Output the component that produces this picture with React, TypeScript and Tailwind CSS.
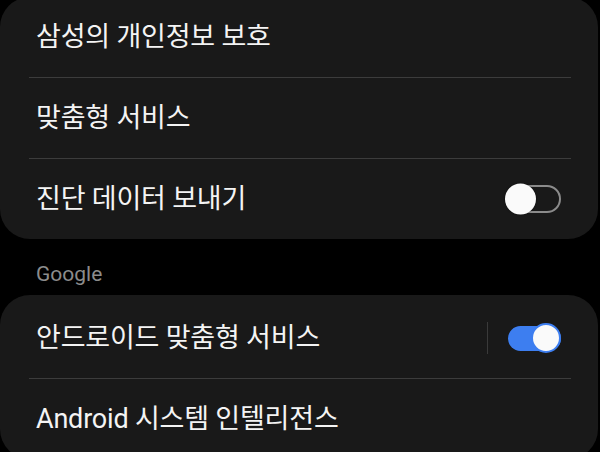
const font = { fontFamily: 'Roboto, "Noto Sans CJK KR", "Noto Sans", sans-serif' }

export default function App() {
  return (
    <div className="h-[452px] w-[600px] overflow-hidden bg-black text-[#f4f4f4]" style={font}>
      <Card className="mt-[-3px]">
        <Row label="삼성의 개인정보 보호" />
        <Divider />
        <Row label="맞춤형 서비스" />
        <Divider />
        <Row label="진단 데이터 보내기" right={<Toggle on={false} />} />
      </Card>

      <p className="px-[36px] pb-[10px] pt-[24px] text-[21px] leading-[22px] text-[#8c8c8c]">Google</p>

      <Card className="pt-[3px]">
        <Row
          label="안드로이드 맞춤형 서비스"
          right={
            <div className="flex items-center gap-[20px]">
              <div className="h-[32px] w-px bg-[#3a3a3a]" />
              <Toggle on />
            </div>
          }
        />
        <Divider />
        <Row label="Android 시스템 인텔리전스" />
      </Card>
    </div>
  )
}

function Card({ children, className = '' }: { children: React.ReactNode; className?: string }) {
  return <div className={`mr-[2px] rounded-[30px] bg-[#191919] ${className}`}>{children}</div>
}

function Row({ label, right }: { label: string; right?: React.ReactNode }) {
  return (
    <div className="flex h-[80px] items-center justify-between pl-[36px] pr-[37px]">
      <span className="text-[27px] leading-none tracking-[-0.2px]">{label}</span>
      {right}
    </div>
  )
}

function Divider() {
  return <div className="ml-[29px] mr-[27px] h-px bg-[#3c3c3c]" />
}

function Toggle({ on }: { on: boolean }) {
  if (on) {
    return (
      <div className="relative h-[25px] w-[53px] rounded-full bg-[#3d7ef0]">
        <div className="absolute right-0 top-1/2 h-[30px] w-[30px] -translate-y-1/2 rounded-full border-2 border-[#3d7ef0] bg-[#fafafa]" />
      </div>
    )
  }
  return (
    <div className="relative h-[28px] w-[54px] rounded-full border-2 border-[#8b8b8b]">
      <div className="absolute left-[-4px] top-1/2 h-[31px] w-[31px] -translate-y-1/2 rounded-full bg-[#fafafa] shadow-[0_0_2px_rgba(0,0,0,0.6)]" />
    </div>
  )
}
